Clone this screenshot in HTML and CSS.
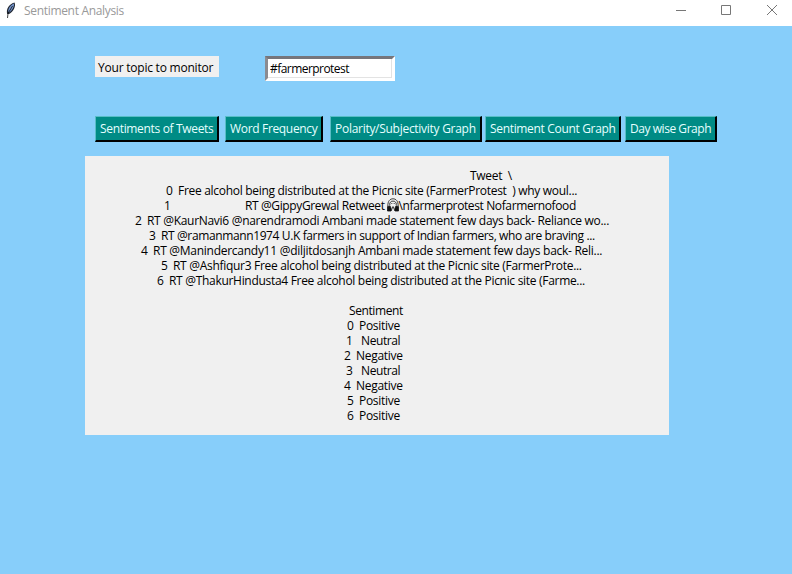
FILE: index.html
```html
<!DOCTYPE html>
<html lang="en">
<head>
<meta charset="utf-8">
<title>Sentiment Analysis</title>
<link rel="stylesheet" href="styles.css">
</head>
<body>
<header class="titlebar">
  <svg class="feather" width="12" height="18" viewBox="0 0 12 18"><path d="M2.2 13C.9 8 3.5 3.500 9.500 1.500C11.200 5 8.500 10.500 4 13Z" fill="#1d2430"/><path d="M3.200 10.500C3.300 6.500 6 4 9 2.600C9.300 6 7 9.500 4.500 11.500Z" fill="#7191c9"/><path d="M2.500 17L3 12.500L7.500 5" fill="none" stroke="#111" stroke-width=".8"/></svg>
  <h1 class="title">Sentiment Analysis</h1>
  <svg class="controls" width="104" height="12" viewBox="0 0 104 12" fill="none" stroke="#777"><path d="M0 6.500H10"/><path d="M45.500 1.500h9v9h-9z"/><path d="M91 1L101 11M101 1L91 11"/></svg>
</header>
<main class="window">
  <div class="topic">
    <label class="label" for="topic">Your topic to monitor</label>
    <input class="entry" id="topic" value="#farmerprotest" spellcheck="false">
  </div>
  <nav class="buttons">
    <button class="btn b1">Sentiments of Tweets</button>
    <button class="btn b2">Word Frequency</button>
    <button class="btn b3">Polarity/Subjectivity Graph</button>
    <button class="btn b4">Sentiment Count Graph</button>
    <button class="btn b5">Day wise Graph</button>
  </nav>
  <section class="output">
    <p class="line head"><span>Tweet&nbsp; \</span></p>
    <p class="line t0"><b>0</b><span>Free alcohol being distributed at the Picnic site (FarmerProtest&nbsp; ) why woul...</span></p>
    <p class="line t1"><b>1</b><span>RT @GippyGrewal Retweet</span><svg class="emoji" width="12" height="14" viewBox="0 0 12 14" fill="none" stroke="#111" stroke-width=".8"><path d="M.8 8C.8 3 3 .8 6 .8S11.200 3 11.200 8"/><path d="M2.800 7.500V5L4.500 3.200H7.500L9.200 5V7.500M4.300 5.500h1M6.700 5.500h1M4 13L6 8.500L8 13"/><path d="M.5 13V8.500L3 8L4 10V13ZM11.500 13V8.500L9 8L8 10V13Z" fill="#111"/></svg><span>\nfarmerprotest Nofarmernofood</span></p>
    <p class="line t2"><b>2</b><span>RT @KaurNavi6 @narendramodi Ambani made statement few days back- Reliance wo...</span></p>
    <p class="line t3"><b>3</b><span>RT @ramanmann1974 U.K farmers in support of Indian farmers, who are braving ...</span></p>
    <p class="line t4"><b>4</b><span>RT @Manindercandy11 @diljitdosanjh Ambani made statement few days back- Reli...</span></p>
    <p class="line t5"><b>5</b><span>RT @Ashfiqur3 Free alcohol being distributed at the Picnic site (FarmerProte...</span></p>
    <p class="line t6"><b>6</b><span>RT @ThakurHindusta4 Free alcohol being distributed at the Picnic site (Farme...</span></p>
    <p class="line gap"></p>
    <p class="line sent"><span>Sentiment</span></p>
    <p class="line pos"><b>0</b><span>Positive</span></p>
    <p class="line neu"><b>1</b><span>Neutral</span></p>
    <p class="line neg"><b>2</b><span>Negative</span></p>
    <p class="line neu"><b>3</b><span>Neutral</span></p>
    <p class="line neg"><b>4</b><span>Negative</span></p>
    <p class="line pos"><b>5</b><span>Positive</span></p>
    <p class="line pos"><b>6</b><span>Positive</span></p>
  </section>
</main>
</body>
</html>
```
FILE: styles.css
```css
* { box-sizing: border-box; }
body {
  margin: 0;
  height: 574px;
  overflow: hidden;
  background: #87cefa;
  color: #000;
  font: 12px/15px "Open Sans", "Noto Sans", sans-serif;
  letter-spacing: -0.3px;
}
.titlebar { display: flex; align-items: center; height: 26px; padding: 0 12px 6px 5px; background: #fff; }
.feather { margin-right: 7px; }
.title { margin: 0; font-size: 12px; font-weight: 400; color: #999; letter-spacing: -0.32px; }
.controls { margin-left: auto; }
.window { padding: 30px 0 0 85px; }
.topic { display: flex; align-items: flex-start; height: 60px; padding-left: 10px; }
.label { width: 124px; height: 21px; padding: 4px 3px 2px; background: #f0f0f0; letter-spacing: -0.22px; white-space: nowrap; }
.entry {
  width: 130px; height: 25px; margin-left: 46px; padding: 0 1px 1px 2px;
  border: 3px solid; border-color: #76767c #fff #fff #8b8b90;
  box-shadow: inset -1px -1px #e3e3e3;
  border-radius: 0; background: #fff; color: #000; font: inherit; letter-spacing: -0.55px; outline: 0;
}
.buttons { display: flex; padding-left: 10px; height: 40px; }
.btn {
  height: 26px; padding: 0 0 0 4px; text-align: left; white-space: nowrap;
  border: solid #000; border-width: 0 2px 2px 0; border-top: 1px solid #59bdc6; border-left: 1px solid #59bdc6;
  border-radius: 0; background: #008b85; color: #e6ffff; font: inherit; letter-spacing: -0.33px;
}
.b1 { width: 124px; margin-right: 6px; }
.b2 { width: 98px; margin-right: 7px; }
.b3 { width: 152px; margin-right: 3px; letter-spacing: -0.28px; }
.b4 { width: 136px; margin-right: 4px; }
.b5 { width: 92px; letter-spacing: -0.45px; }
.output { width: 584px; height: 279px; padding-top: 12px; background: #f0f0f0; }
.line { display: flex; height: 15px; margin: 0; white-space: nowrap; }
.line b { flex: none; width: 12px; font-weight: 400; }
.emoji { flex: none; margin: 0 0 0 2px; }
.head { padding-left: 385px; }
.t0 { padding-left: 81px; }
.t1 { padding-left: 79px; letter-spacing: -0.38px; }
.t1 b { width: 81px; }
.t2 { padding-left: 50px; }
.t3 { padding-left: 64px; letter-spacing: -0.38px; }
.t4 { padding-left: 56px; letter-spacing: -0.27px; }
.t5 { padding-left: 76px; }
.t6 { padding-left: 72px; }
.sent { padding-left: 264px; letter-spacing: -0.4px; }
.pos { padding-left: 262px; }
.neu { padding-left: 261px; letter-spacing: -0.4px; }
.neu b { width: 15px; }
.neg { padding-left: 259px; }
```
